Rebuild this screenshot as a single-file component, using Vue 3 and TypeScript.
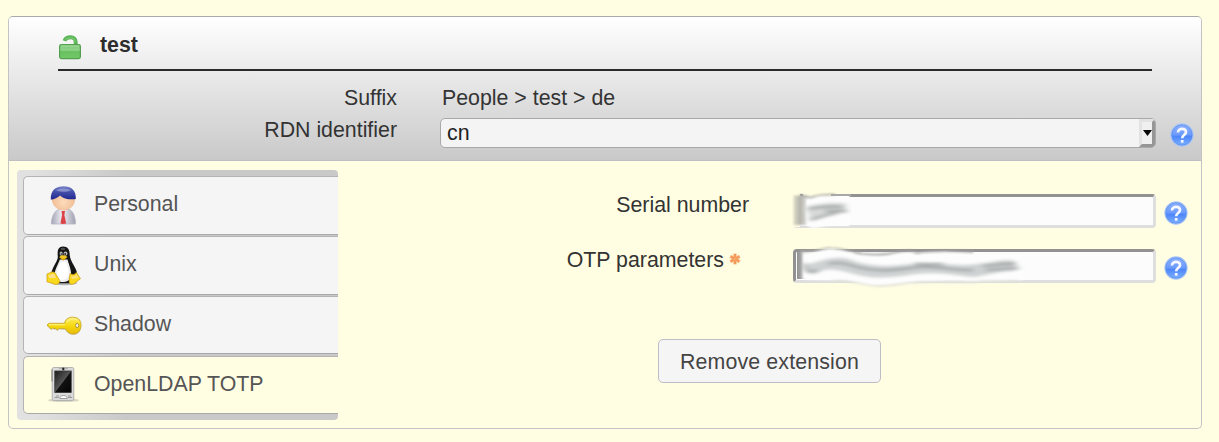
<script setup lang="ts">
type IconName = 'person' | 'penguin' | 'key' | 'device'

interface Tab {
  label: string
  icon: IconName
  active?: boolean
}

const tabs: Tab[] = [
  { label: 'Personal', icon: 'person' },
  { label: 'Unix', icon: 'penguin' },
  { label: 'Shadow', icon: 'key' },
  { label: 'OpenLDAP TOTP', icon: 'device', active: true },
]

const fields = [
  { label: 'Serial number', required: false, smudge: 'short' },
  { label: 'OTP parameters', required: true, smudge: 'long' },
]
</script>

<template>
  <!-- shared gradients and symbols -->
  <svg class="defs" width="0" height="0">
    <defs>
      <linearGradient id="helpFill" x1="0" y1="0" x2="0" y2="1">
        <stop offset="0" stop-color="#8fb2ff" />
        <stop offset="0.5" stop-color="#6c9bfc" />
        <stop offset="0.55" stop-color="#4c84fb" />
        <stop offset="1" stop-color="#7fb4ff" />
      </linearGradient>
      <symbol id="help" viewBox="0 0 24 24">
        <circle cx="12" cy="12" r="11" fill="url(#helpFill)" stroke="#a9c5f6" stroke-width="1.3" />
        <circle cx="12" cy="12" r="10.2" fill="none" stroke="#5b8eee" stroke-width="0.8" />
        <path d="M8 9.4C8 4.7 16.2 4.7 16 9.2C15.8 12.1 12.2 11.9 12.2 15.2" fill="none" stroke="#f6f9ff" stroke-width="2.7" />
        <rect x="10.8" y="16.9" width="2.8" height="2.8" rx="0.7" fill="#f6f9ff" />
      </symbol>
    </defs>
  </svg>

  <main class="card">
    <header class="head">
      <div class="title">
        <svg class="lock" width="24" height="25" viewBox="0 0 24 25">
          <defs>
            <linearGradient id="lockFill" x1="0" y1="0" x2="0" y2="1">
              <stop offset="0" stop-color="#7cc978" />
              <stop offset="0.4" stop-color="#8fd389" />
              <stop offset="0.5" stop-color="#69c160" />
              <stop offset="1" stop-color="#72c866" />
            </linearGradient>
          </defs>
          <path d="M6.5 5.8C8 1.6 17.7 .4 17.7 7V10" fill="none" stroke="#5cb457" stroke-width="4" />
          <path d="M7 5.2C9 1.8 17.2 1.3 17.2 7.5" fill="none" stroke="#70c669" stroke-width="1.4" />
          <rect x="1.6" y="9.6" width="20.8" height="14" rx="1.8" fill="url(#lockFill)" stroke="#55a050" stroke-width="1.2" />
          <path d="M3 11H21" stroke="#a5dda0" />
        </svg>
        <strong>test</strong>
      </div>
      <div class="row">
        <span class="label">Suffix</span>
        <span class="crumb">People &gt; test &gt; de</span>
      </div>
      <div class="row">
        <span class="label">RDN identifier</span>
        <div class="select">
          <span>cn</span>
          <i class="drop"><svg width="9" height="6" viewBox="0 0 9 6"><path d="M0 0H9L4.5 6Z" fill="#080808" /></svg></i>
        </div>
        <svg class="help" width="24" height="24"><use href="#help" /></svg>
      </div>
    </header>

    <div class="body">
      <nav class="tabs">
        <a v-for="tab in tabs" :key="tab.label" class="tab" :class="{ active: tab.active }">
          <svg v-if="tab.icon === 'person'" class="icon" width="40" height="42" viewBox="0 0 40 42">
            <defs>
              <linearGradient id="hair" x1="0" y1="0" x2="0" y2="1">
                <stop offset="0" stop-color="#7c86cc" />
                <stop offset="0.35" stop-color="#4a55ad" />
                <stop offset="1" stop-color="#1e2891" />
              </linearGradient>
              <radialGradient id="skin" cx="0.5" cy="0.65" r="0.6">
                <stop offset="0" stop-color="#fddcbb" />
                <stop offset="1" stop-color="#edb68d" />
              </radialGradient>
              <linearGradient id="suit" x1="0" x2="1">
                <stop offset="0" stop-color="#a3a3b5" />
                <stop offset="0.45" stop-color="#f1f0f6" />
                <stop offset="1" stop-color="#9e9eb0" />
              </linearGradient>
            </defs>
            <path d="M8.3 39C8.5 31 12 25.3 16 24.5H26C30 25.5 32.5 32 32.5 39Z" fill="url(#suit)" stroke="#b5b5c5" stroke-width="0.8" />
            <path d="M18.5 26H22L21.4 30L23.2 38.5L20 39L17.4 38.5L19 30Z" fill="#dc4348" />
            <circle cx="20.5" cy="13.7" r="11.7" fill="url(#skin)" />
            <path d="M7.8 14.5C7.3 5 13 1.2 20.5 1.2C28.5 1.2 33.4 5.5 32.8 14C29 14.8 20 14.3 17.3 10.4C15 11.8 12.5 14.2 7.8 14.5Z" fill="url(#hair)" />
            <path d="M13 5.5C16 2.8 25 2.8 28 5.5C23 7.3 18 7.2 13 5.5Z" fill="#a4acdf" opacity="0.65" />
          </svg>

          <svg v-else-if="tab.icon === 'penguin'" class="icon" width="40" height="42" viewBox="0 0 40 42">
            <ellipse cx="21" cy="38" rx="13" ry="2.2" fill="#888" opacity="0.6" />
            <path d="M20 1.5C15 1.5 14.2 6 14.8 11.5C15 16 10.5 20 8.2 28C7 33 10 38 17 38.3H26C33 38 36 33 33.5 26C31.5 20 27.4 16.5 26.7 10C26.8 5 25 1.5 20 1.5Z" fill="#151515" />
            <path d="M16.8 14.5C15.5 19 12.3 23 11.7 29C11.2 34.5 16 37.5 20.5 37C27 36.5 29 32 27.8 26C27 21.5 25.5 18 24.5 14.5Z" fill="#eeeef0" />
            <path d="M17.5 17C15.6 21 14 25 14 29C14.1 34 18 36 21 34.8C25 34 26 30 25.5 26C25 22.5 24 19.5 23 16.5Z" fill="#fff" />
            <ellipse cx="18.1" cy="8.7" rx="1.5" ry="2.1" fill="#bbb" />
            <ellipse cx="22.5" cy="8.6" rx="1.9" ry="2.2" fill="#bbb" />
            <circle cx="18.3" cy="9" r="0.8" fill="#222" />
            <circle cx="22.2" cy="9" r="0.9" fill="#222" />
            <path d="M16.3 12.2C18.5 9.5 21.5 10 24.5 12L20.3 15.3Z" fill="#f4c921" />
            <path d="M16.5 12.8C18.5 14.1 21.5 14.2 24.2 12.5L20.3 15.4Z" fill="#d99a0b" />
            <path d="M17.5 3.5C18.8 2.4 21 2.4 22.5 3.7L21.5 5H18.2Z" fill="#666" opacity="0.7" />
            <path d="M4 29C7 28 9 26 11.8 27.6L16.7 35.5C16.5 39.5 13 40.3 9.7 38.4L4 36.8Z" fill="#f9d91d" stroke="#d2a31a" stroke-width="0.8" />
            <path d="M5.4 30.2C8 30 9.5 28 11.2 29L13 33L6 33Z" fill="#ffe08a" />
            <path d="M27.3 28.3C29 30.4 32 29.7 33.3 27.5L37.5 33.7C34 36 31.5 39.5 28 39.3C25.3 38.5 26 33 27.3 28.3Z" fill="#f9d91d" stroke="#d2a31a" stroke-width="0.8" />
            <path d="M28 30.2C30 32 32.5 31 33.4 29L35.5 33L29 34Z" fill="#ffe07c" />
          </svg>

          <svg v-else-if="tab.icon === 'key'" class="icon" width="40" height="42" viewBox="0 1.7 40 42">
            <defs>
              <linearGradient id="gold" x1="0" y1="0" x2="0" y2="1">
                <stop offset="0" stop-color="#ffed69" />
                <stop offset="0.5" stop-color="#f5d90f" />
                <stop offset="1" stop-color="#e9b808" />
              </linearGradient>
            </defs>
            <path d="M4 21.7L6 20H21.5C22.5 15 26.5 13.5 31 14C36 14.3 38.5 18 38 23C37.5 28 34.5 30.7 30.5 30.8C27 31 24 28.8 22.2 25.4H17.5L16 25L14.5 27L13 25.4H11L9.8 24.8L8.3 26L6.3 24.2Z" fill="#999" opacity="0.3" transform="translate(0 1)" />
            <path d="M4 21.7L6 20H21.5C22.5 15 26.5 13.5 31 14C36 14.3 38.5 18 38 23C37.5 28 34.5 30.7 30.5 30.8C27 31 24 28.8 22.2 25.4H17.5L16 25L14.5 27L13 25.4H11L9.8 24.8L8.3 26L6.3 24.2Z" fill="url(#gold)" stroke="#c2a22a" stroke-width="0.8" />
            <path d="M6 21.5H22M24 19C26 15.5 31 14.5 34.5 17" fill="none" stroke="#fff48c" stroke-width="1.1" />
            <ellipse cx="34.2" cy="22.2" rx="1.6" ry="2.2" fill="#eee" stroke="#aa8c20" stroke-width="0.9" />
          </svg>

          <svg v-else class="icon" width="40" height="42" viewBox="0 1.5 40 42">
            <defs>
              <linearGradient id="screen" x1="0" y1="0" x2="1" y2="1">
                <stop offset="0" stop-color="#1c1c1c" />
                <stop offset="0.49" stop-color="#555" />
                <stop offset="0.52" stop-color="#111" />
                <stop offset="1" stop-color="#030303" />
              </linearGradient>
            </defs>
            <ellipse cx="20.5" cy="36.8" rx="15.5" ry="1.8" fill="#9a9a90" opacity="0.4" />
            <rect x="9.2" y="4" width="21.6" height="33" rx="1.6" fill="#dadada" stroke="#b2b2b2" />
            <path d="M9 6V18" stroke="#888" stroke-width="1.2" />
            <rect x="11.8" y="7.5" width="16.4" height="21.5" fill="url(#screen)" stroke="#333" stroke-width="0.8" />
            <path d="M16 5.2H25" stroke="#aaa" />
            <rect x="19.3" y="4.2" width="2" height="2.6" fill="#222" />
            <path d="M11.5 34H15.5M25 34H29.2M13 32.5H16M25 32.5H28" stroke="#999" stroke-width="1" />
            <path d="M16.8 35C16.5 31 24.5 31 24.2 35Z" fill="#fff" stroke="#888" stroke-width="0.8" />
          </svg>
          <span>{{ tab.label }}</span>
        </a>
      </nav>

      <section class="form">
        <div v-for="field in fields" :key="field.label" class="field">
          <span class="field-label">
            {{ field.label }}
            <svg v-if="field.required" class="star" width="12" height="12" viewBox="0 0 12 12">
              <path d="M6 .5V11.5M1.2 3.2L10.8 8.8M10.8 3.2L1.2 8.8" stroke="#f8c095" stroke-width="3.4" />
              <path d="M6 1V11M1.7 3.5L10.3 8.5M10.3 3.5L1.7 8.5" stroke="#f49a58" stroke-width="2.1" />
              <circle cx="6" cy="6" r="1.5" fill="#f8ab68" />
            </svg>
          </span>
          <div class="input">
            <svg v-if="field.smudge === 'short'" class="smudge" width="260" height="50" viewBox="0 0 260 50">
              <defs>
                <filter id="soft" x="-10%" y="-30%" width="120%" height="160%"><feGaussianBlur stdDeviation="1" /></filter>
                <filter id="softer" x="-10%" y="-50%" width="120%" height="200%"><feGaussianBlur stdDeviation="3 1.6" /></filter>
                <linearGradient id="edge" x1="0" x2="1">
                  <stop offset="0" stop-color="#deddc8" />
                  <stop offset="0.4" stop-color="#b4b3aa" />
                  <stop offset="1" stop-color="#f2f2f2" />
                </linearGradient>
                <linearGradient id="edgeDark" x1="0" x2="1">
                  <stop offset="0" stop-color="#929292" />
                  <stop offset="0.3" stop-color="#a0a0a0" />
                  <stop offset="1" stop-color="#fdfdfd" />
                </linearGradient>
              </defs>
              <path d="M9 6H17V41H9Z" fill="#fffde2" />
              <path d="M17 10H66V40H17Z" fill="#fdfdfd" />
              <path d="M20 7H50V11H20Z" fill="#fffde2" />
              <g filter="url(#soft)">
                <path d="M10.5 9.5H27V39H10.5Z" fill="url(#edge)" />
                <path d="M23 13C30 12 37 9.5 48 10.5H67V39C55 39 46 39 38 41C30 43 25 42 23 37Z" fill="#fdfdfd" />
                <path d="M17 9C23 10 26 13 30 11C34 9 40 8.5 52 8.5" fill="none" stroke="#a0a09a" stroke-width="1.6" />
              </g>
              <path d="M48 8H68V10H48Z" fill="#a8a8a6" />
              <g filter="url(#softer)">
                <path d="M22 21C32 18 44 16 63 17V27C50 28 36 29 28 34Z" fill="#d6d9d8" />
                <path d="M26 23C39 20 48 20 60 21M42 25H64M27 34C36 32 40 29 54 27" fill="none" stroke="#979c9a" stroke-width="2.2" />
              </g>
            </svg>
            <svg v-else class="smudge" width="260" height="50" viewBox="0 0 260 50">
              <path d="M14 11H24V38H14Z" fill="url(#edgeDark)" />
              <g filter="url(#soft)">
                <path d="M20 12C32 14 38 7 48 8C63 8 68 14 84 15C105 17 112 12 128 12C153 9 174 12 201 14L240 14V39C225 37 210 41 184 40C170 39 157 40 143 40C126 40 112 44 94 44C72 43 66 37 49 39L20 38Z" fill="#fdfdfd" />
                <path d="M17 10C32 13 38 6 48 7C63 7 68 12 78 12" fill="none" stroke="#b4b4ac" stroke-width="1.5" />
                <path d="M70 11C80 14 92 14 105 13C112 12 120 9 128 10L134 12C152 9 172 10 190 11" fill="none" stroke="#a0a09e" stroke-width="1.8" />
                <path d="M49 40C65 37 73 44 94 45C111 45 126 41 143 41C161 40 180 43 201 40L236 40" fill="none" stroke="#deded6" stroke-width="1.5" />
              </g>
              <path d="M182 8H240V10.5H200Z" fill="#929292" />
              <g filter="url(#softer)">
                <path d="M21 24C20 20 25 24 27 23C42 18 54 15 66 18C81 25 106 27 133 22C154 21 173 26 194 23C210 22 221 17 232 20V30C211 30 202 36 188 36C166 33 153 31 132 33C111 37 92 38 75 34C54 28 43 26 34 32C25 35 20 31 21 24Z" fill="#cfd2d2" />
                <path d="M21 22C20 29 28 33 35 29M45 23C64 19 69 28 94 29C111 31 120 27 139 26C158 25 171 30 190 29M132 23H160M200 25C215 24 222 22 233 23M203 29L236 27" fill="none" stroke="#999e9d" stroke-width="2.2" />
              </g>
            </svg>
          </div>
          <svg class="help" width="24" height="24"><use href="#help" /></svg>
        </div>
        <button class="remove" type="button">Remove extension</button>
      </section>
    </div>
  </main>
</template>

<style>
body {
  background: #fffde2;
}
</style>

<style scoped>
.defs {
  position: absolute;
}
.card {
  box-sizing: border-box;
  width: 1194px;
  height: 413px;
  margin: 16px 0 0 8px;
  border: 1px solid #c3c3c6;
  border-top-color: #a9a9a9;
  border-radius: 5px;
  overflow: hidden;
  font: 21.33px/32px "Liberation Sans", Arial, sans-serif;
  color: #333;
}
.head {
  box-sizing: border-box;
  height: 144px;
  border-bottom: 1px solid #bebec3;
  background: linear-gradient(#fff, #c9c9c9);
}
.title {
  box-sizing: border-box;
  display: flex;
  height: 54px;
  margin: 0 49px 11px;
  padding-top: 12px;
  gap: 18px;
  border-bottom: 2px solid #2b292a;
  color: #2d2d2d;
}
.lock {
  margin-top: 6px;
}
.row {
  display: flex;
  height: 32px;
}
.label {
  width: 388px;
  margin-right: 43px;
  text-align: right;
}
.crumb {
  padding-left: 2px;
}
.select {
  box-sizing: border-box;
  display: flex;
  justify-content: space-between;
  width: 716px;
  height: 30px;
  margin: 4px 14px 0 0;
  padding-left: 6px;
  border: 1px solid #a9a9a9;
  border-radius: 5px;
  background: #f4f4f4;
  line-height: 29px;
  color: #222;
  overflow: hidden;
}
.drop {
  box-sizing: border-box;
  display: flex;
  align-items: center;
  justify-content: center;
  width: 16px;
  height: 28px;
  border: 3px solid;
  border-color: #e3e3e3 #969696 #969696 #e3e3e3;
  background: #f0f0f0;
}
.drop svg {
  flex: none;
}
.help {
  flex: none;
}
.row .help {
  margin-top: 9px;
}
.body {
  display: flex;
  padding: 9px 0 0 8px;
}
.tabs {
  box-sizing: border-box;
  display: grid;
  grid-template-rows: 59px 59px 58px 58px;
  row-gap: 1px;
  width: 321px;
  height: 250px;
  padding: 6px 0 0 6px;
  border-radius: 4px;
  background: linear-gradient(to right, #e1e1e1 15px, #c9c9c9 110px);
}
.tab:nth-child(n + 4) {
  margin-top: 1px;
  height: 56px;
}
.tab {
  display: flex;
  border: 1px solid #b4b4b4;
  border-bottom-color: #a9a9a9;
  border-right: 0;
  border-radius: 5px 0 0 5px;
  background: #f5f5f5;
  padding-left: 19px;
  color: #555;
  line-height: 55px;
}
.tab.active {
  background: #fffde2;
}
.icon {
  flex: none;
  margin: 8px 11px 0 0;
}
.form {
  flex: 1;
  padding-top: 24px;
}
.field {
  display: flex;
  height: 34px;
  margin-bottom: 21px;
}
.field-label {
  display: flex;
  justify-content: flex-end;
  width: 411px;
  margin: -5px 44px 0 0;
}
.star {
  margin: 9px 8px 0 5px;
}
.input {
  box-sizing: border-box;
  position: relative;
  width: 363px;
  border: 3px solid;
  border-color: #929292 #dedede #dedede #929292;
  border-radius: 4px;
  background: #fcfcfc;
  margin-right: 8px;
}
.smudge {
  position: absolute;
  left: -13px;
  top: -11px;
}
.field .help {
  margin-top: 7px;
}
.remove {
  display: block;
  box-sizing: border-box;
  width: 223px;
  height: 44px;
  margin: 56px 0 0 320px;
  padding: 2px 0 0;
  border: 1px solid #bdbdc5;
  border-radius: 5px;
  background: #f5f5f5;
  color: #444;
  font: inherit;
  letter-spacing: 0.15px;
}
</style>
